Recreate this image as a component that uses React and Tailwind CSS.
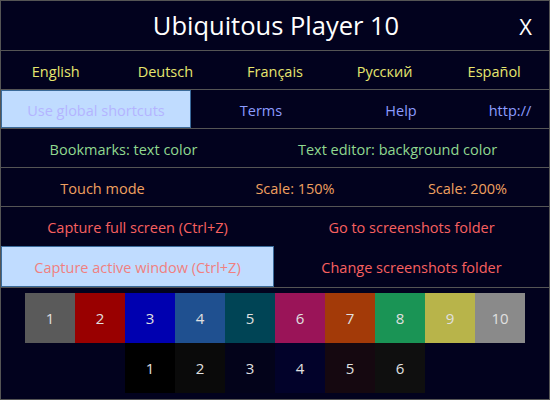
const languages = ["English", "Deutsch", "Français", "Русский", "Español"];

const topColors = [
  { n: "1", bg: "bg-[#5a5a5a]" },
  { n: "2", bg: "bg-[#990000]" },
  { n: "3", bg: "bg-[#0000b0]" },
  { n: "4", bg: "bg-[#1f5090]" },
  { n: "5", bg: "bg-[#004455]" },
  { n: "6", bg: "bg-[#9a1458]" },
  { n: "7", bg: "bg-[#a33a08]" },
  { n: "8", bg: "bg-[#1a9455]" },
  { n: "9", bg: "bg-[#b8b44a]" },
  { n: "10", bg: "bg-[#8a8a8a]" },
];

const darkColors = [
  { n: "1", bg: "bg-[#000000]" },
  { n: "2", bg: "bg-[#0a0a0a]" },
  { n: "3", bg: "bg-[#03031a]" },
  { n: "4", bg: "bg-[#02022a]" },
  { n: "5", bg: "bg-[#150810]" },
  { n: "6", bg: "bg-[#0f0f0f]" },
];

const Cell = ({ w, active, color, children }) => (
  <div
    className={`${w} flex items-center justify-center pt-[3px] ${
      active ? "bg-[#c0dcff] border border-[#3a6a9a]" : ""
    } ${color}`}
  >
    {children}
  </div>
);

export default function App() {
  return (
    <div
      className="w-[550px] h-[400px] border border-[#555555] bg-[#02021e] overflow-hidden text-[14.5px] flex flex-col"
      style={{ fontFamily: '"Open Sans", "Noto Sans", sans-serif' }}
    >
      <div className="h-[50px] shrink-0 border-b border-[#555555] flex items-center relative">
        <div className="flex-1 text-center text-white text-[25.5px] pl-[2px]">
          Ubiquitous Player 10
        </div>
        <div className="absolute right-[17px] top-[9px] text-white text-[22px]">X</div>
      </div>

      <div className="h-[39px] shrink-0 border-b border-[#555555] grid grid-cols-5 text-[#e6e66e]">
        {languages.map((l) => (
          <div key={l} className="flex items-center justify-center pt-[3px]">
            {l}
          </div>
        ))}
      </div>

      <div className="h-[39px] shrink-0 border-b border-[#555555] flex text-[#8c9cff]">
        <Cell w="w-[190px]" active color="text-[#b4b4ff]">
          Use global shortcuts
        </Cell>
        <Cell w="w-[140px]">Terms</Cell>
        <Cell w="w-[140px]">Help</Cell>
        <Cell w="flex-1">http://</Cell>
      </div>

      <div className="h-[39px] shrink-0 border-b border-[#555555] flex text-[#90d890]">
        <Cell w="w-[245px]">Bookmarks: text color</Cell>
        <Cell w="flex-1">Text editor: background color</Cell>
      </div>

      <div className="h-[39px] shrink-0 border-b border-[#555555] flex text-[#f0a060]">
        <Cell w="w-[203px]">Touch mode</Cell>
        <Cell w="w-[182px]">Scale: 150%</Cell>
        <Cell w="flex-1">Scale: 200%</Cell>
      </div>

      <div className="h-[39px] shrink-0 flex text-[#f86060]">
        <Cell w="w-[273px]">Capture full screen (Ctrl+Z)</Cell>
        <Cell w="flex-1">Go to screenshots folder</Cell>
      </div>

      <div className="h-[42px] shrink-0 border-b border-[#555555] flex text-[#f86060]">
        <Cell w="w-[273px]" active color="text-[#f08080]">
          Capture active window (Ctrl+Z)
        </Cell>
        <Cell w="flex-1">Change screenshots folder</Cell>
      </div>

      <div className="pt-[5px] pl-[24px] flex flex-col text-[#e0e0e0] text-[15px]">
        <div className="flex">
          {topColors.map((c) => (
            <div key={c.n} className={`w-[50px] h-[50px] flex items-center justify-center ${c.bg}`}>
              {c.n}
            </div>
          ))}
        </div>
        <div className="flex pl-[100px]">
          {darkColors.map((c) => (
            <div key={c.n} className={`w-[50px] h-[50px] flex items-center justify-center ${c.bg}`}>
              {c.n}
            </div>
          ))}
        </div>
      </div>
    </div>
  );
}
